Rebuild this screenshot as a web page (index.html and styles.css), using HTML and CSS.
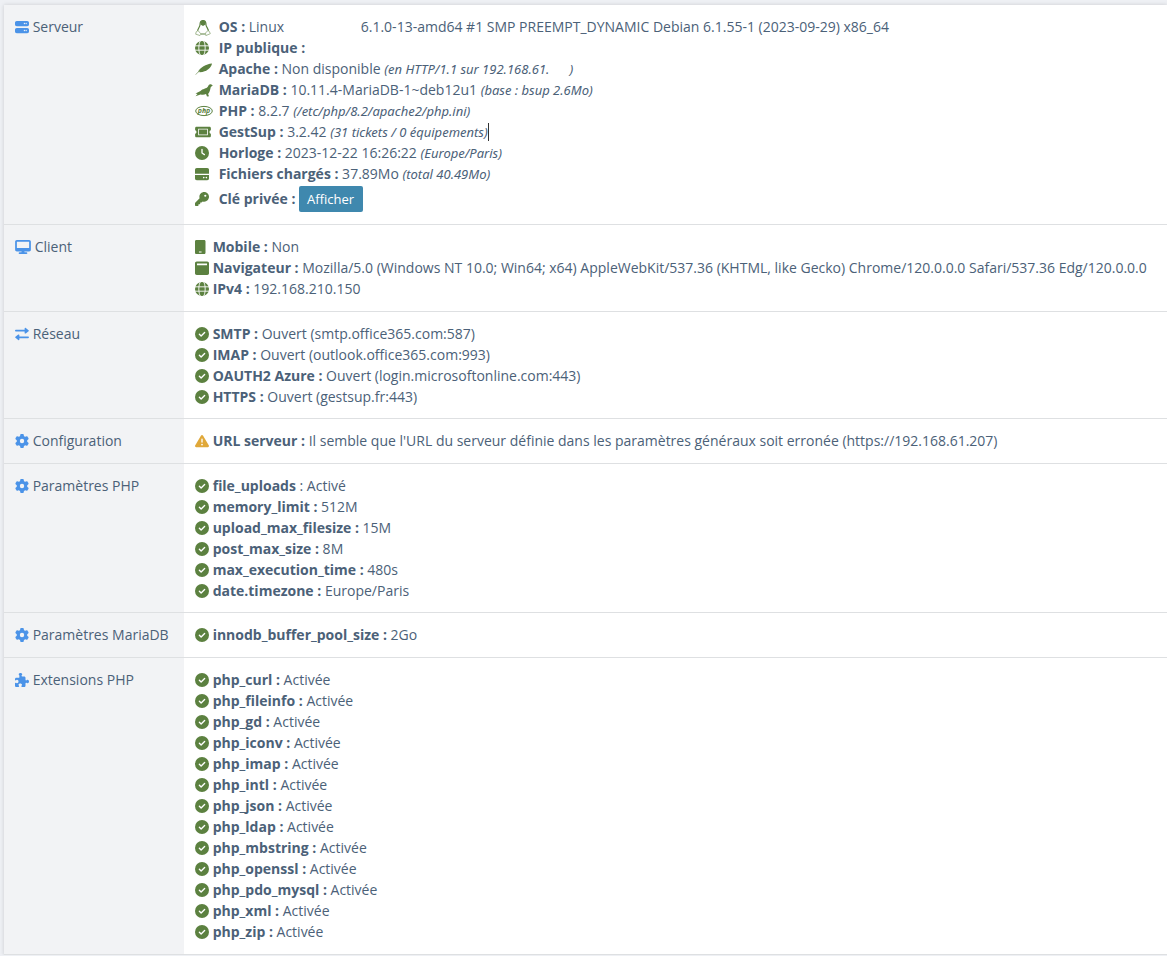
FILE: index.html
```html
<!DOCTYPE html>
<html lang="fr">
<head>
  <meta charset="UTF-8">
  <meta name="viewport" content="width=device-width, initial-scale=1.0">
  <title>GestSup - Système</title>
  <link rel="stylesheet" href="styles.css">
</head>
<body>
<svg class="sprite" aria-hidden="true">
  <symbol id="server" viewBox="0 0 512 512">
    <path fill-rule="evenodd" d="M64 32C29 32 0 61 0 96v64c0 35 29 64 64 64h384c35 0 64-29 64-64V96c0-35-29-64-64-64zM344 104a24 24 0 1 1 0 48 24 24 0 1 1 0-48zm64 0a24 24 0 1 1 0 48 24 24 0 1 1 0-48zM64 288c-35 0-64 29-64 64v64c0 35 29 64 64 64h384c35 0 64-29 64-64v-64c0-35-29-64-64-64zM344 360a24 24 0 1 1 0 48 24 24 0 1 1 0-48zm64 0a24 24 0 1 1 0 48 24 24 0 1 1 0-48z"/>
  </symbol>
  <symbol id="desktop" viewBox="0 0 576 512">
    <path fill-rule="evenodd" d="M64 0C29 0 0 29 0 64v288c0 35 29 64 64 64h176l-11 32h-69c-18 0-32 14-32 32s14 32 32 32h256c18 0 32-14 32-32s-14-32-32-32h-69l-11-32h176c35 0 64-29 64-64V64c0-35-29-64-64-64zm0 64h448v224H64z"/>
  </symbol>
  <symbol id="exchange" viewBox="0 0 512 512">
    <path d="M0 136c0-18 12-32 30-32h322V56c0-22 26-33 41-18l104 80c15 12 15 24 0 36l-104 80c-15 15-41 4-41-18v-48H30c-18 0-30-14-30-32zM512 376c0-18-12-32-30-32H160v-48c0-22-26-33-41-18L15 358c-15 12-15 24 0 36l104 80c15 15 41 4 41-18v-48h322c18 0 30-14 30-32z"/>
  </symbol>
  <symbol id="gear" viewBox="0 0 512 512">
    <path d="M495.9 166.6c3.2 8.7 .5 18.4-6.4 24.6l-43.3 39.4c1.1 8.3 1.7 16.8 1.7 25.4s-.6 17.1-1.7 25.4l43.3 39.4c6.9 6.2 9.6 15.9 6.4 24.6c-4.4 11.9-9.7 23.3-15.8 34.3l-4.7 8.1c-6.6 11-14 21.4-22.1 31.2c-5.9 7.2-15.7 9.6-24.5 6.8l-55.7-17.7c-13.4 10.3-28.2 18.9-44 25.4l-12.5 57.1c-2 9.1-9 16.3-18.2 17.8c-13.8 2.3-28 3.5-42.5 3.5s-28.7-1.2-42.5-3.5c-9.2-1.5-16.2-8.7-18.2-17.8l-12.5-57.1c-15.8-6.5-30.6-15.1-44-25.4L83.1 425.9c-8.8 2.8-18.6 .3-24.5-6.8c-8.1-9.8-15.5-20.2-22.1-31.2l-4.7-8.1c-6.1-11-11.4-22.4-15.8-34.3c-3.2-8.7-.5-18.4 6.4-24.6l43.3-39.4C64.6 273.1 64 264.6 64 256s.6-17.1 1.7-25.4L22.4 191.2c-6.9-6.2-9.6-15.9-6.4-24.6c4.4-11.9 9.7-23.3 15.8-34.3l4.7-8.1c6.6-11 14-21.4 22.1-31.2c5.9-7.2 15.7-9.6 24.5-6.8l55.7 17.7c13.4-10.3 28.2-18.9 44-25.4l12.5-57.1c2-9.1 9-16.3 18.2-17.8C227.3 1.2 241.5 0 256 0s28.7 1.2 42.5 3.5c9.2 1.5 16.2 8.7 18.2 17.8l12.5 57.1c15.8 6.5 30.6 15.1 44 25.4l55.7-17.7c8.8-2.8 18.6-.3 24.5 6.8c8.1 9.8 15.5 20.2 22.1 31.2l4.7 8.1c6.1 11 11.4 22.4 15.8 34.3zM256 336a80 80 0 1 0 0-160 80 80 0 1 0 0 160z"/>
  </symbol>
  <symbol id="puzzle" viewBox="0 0 512 512">
    <path d="M160 104c0-13-6-19-13-27-7-7-11-16-11-25 0-29 29-52 64-52s64 23 64 52c0 9-4 18-11 25-7 8-13 14-13 27 0 13 11 24 24 24h72c26 0 48 22 48 48v72c0 13 11 24 24 24 13 0 19-6 27-13 7-7 16-11 25-11 29 0 52 29 52 64s-23 64-52 64c-9 0-18-4-25-11-8-7-14-13-27-13-13 0-24 11-24 24v88c0 26-22 48-48 48h-80c-13 0-24-11-24-24 0-13 6-19 13-27 7-7 11-16 11-25 0-29-29-52-64-52s-64 23-64 52c0 9 4 18 11 25 7 8 13 14 13 27 0 13-11 24-24 24H48c-26 0-48-22-48-48v-88c0-13 11-24 24-24 13 0 19 6 27 13 7 7 16 11 25 11 29 0 52-29 52-64s-23-64-52-64c-9 0-18 4-25 11-8 7-14 13-27 13-13 0-24-11-24-24v-24c0-26 22-48 48-48h88c13 0 24-11 24-24z"/>
  </symbol>
  <symbol id="check" viewBox="0 0 512 512">
    <circle cx="256" cy="256" r="256"/>
    <path d="M160 264l64 64 128-128" fill="none" stroke="#fff" stroke-width="50" stroke-linecap="round" stroke-linejoin="round"/>
  </symbol>
  <symbol id="warning" viewBox="0 0 512 512">
    <path d="M256 32c14 0 27 7 35 20l216 368c16 27-3 60-35 60H40c-32 0-51-33-35-60L221 52c8-13 21-20 35-20z"/>
    <path d="M256 184v112" fill="none" stroke="#fff" stroke-width="48" stroke-linecap="round"/>
    <circle cx="256" cy="384" r="32" fill="#fff"/>
  </symbol>
  <symbol id="globe" viewBox="0 0 512 512">
    <circle cx="256" cy="256" r="256"/>
    <g fill="none" stroke="#fff" stroke-width="32">
      <path d="M0 176h512M0 336h512"/>
      <path d="M200-10C120 90 120 422 200 522M312-10c80 100 80 432 0 532"/>
    </g>
  </symbol>
  <symbol id="clock" viewBox="0 0 512 512">
    <circle cx="256" cy="256" r="256"/>
    <path d="M256 120v136l88 60" fill="none" stroke="#fff" stroke-width="48" stroke-linecap="round" stroke-linejoin="round"/>
  </symbol>
  <symbol id="drive" viewBox="0 0 512 512">
    <path d="M0 96c0-35 29-64 64-64h384c35 0 64 29 64 64v150H0z"/>
    <path fill-rule="evenodd" d="M0 288h512v128c0 35-29 64-64 64H64c-35 0-64-29-64-64zM320 356a30 30 0 1 0 0 60 30 30 0 1 0 0-60zm96 0a30 30 0 1 0 0 60 30 30 0 1 0 0-60z"/>
  </symbol>
  <symbol id="key" viewBox="0 0 512 512">
    <path d="M336 352c97.2 0 176-78.8 176-176S433.2 0 336 0S160 78.8 160 176c0 18.7 2.9 36.8 8.3 53.7L7 391c-4.5 4.5-7 10.6-7 17v80c0 13.3 10.7 24 24 24h80c13.3 0 24-10.7 24-24V448h40c13.3 0 24-10.7 24-24V384h40c6.4 0 12.5-2.5 17-7l33.3-33.3c16.9 5.4 35 8.3 53.7 8.3zM376 96a40 40 0 1 1 0 80 40 40 0 1 1 0-80z"/>
  </symbol>
  <symbol id="ticket" viewBox="0 0 576 512">
    <path fill-rule="evenodd" d="M48 64h480c27 0 48 21 48 48v80c-35 0-48 29-48 64s13 64 48 64v80c0 27-21 48-48 48H48c-27 0-48-21-48-48v-80c35 0 48-29 48-64s-13-64-48-64v-80c0-27 21-48 48-48zm64 72v240h352V136z"/>
    <path d="M142 164h292v184H142z"/>
  </symbol>
  <symbol id="mobile" viewBox="0 0 384 512" preserveAspectRatio="xMinYMid">
    <path fill-rule="evenodd" d="M48 0h288c26 0 48 22 48 48v416c0 26-22 48-48 48H48c-26 0-48-22-48-48V48C0 22 22 0 48 0zm96 424v34h96v-34z"/>
  </symbol>
  <symbol id="window" viewBox="0 0 512 512">
    <path fill-rule="evenodd" d="M64 16h384c35 0 64 29 64 64v368c0 35-29 64-64 64H64c-35 0-64-29-64-64V80c0-35 29-64 64-64zm8 72v66h368V88z"/>
  </symbol>
  <symbol id="linux" viewBox="0 0 16 16">
    <path d="M5 5C5 2 6 .5 8 .5S11 2 11 5c.3 2 2.500 4 2.500 6.500M5 5c-.2 2-2.500 4-2.500 6.500M6 14h4.500" fill="none" stroke="#5c8140" stroke-width="1.200"/>
    <path d="M5.500 2c1-2 4-2 5 0v2.500L8 6 5.500 4.500z"/>
    <path d="M3 10.500l3 3.500-1 1.500-4.300-1.300.5-2.400zM13 10.500l-2.500 2.500.3 2.600 4.500-1.900-1-2.300z" fill="#fff" stroke="#8fa97a" stroke-width=".8"/>
  </symbol>
  <symbol id="feather" viewBox="0 0 18 14">
    <path d="M3 9.800C5 5.500 11 2 17 1.500c-.5 4-5.500 8.500-12 8.800z"/>
    <path d="M.8 12.500C2 11 3 10 5 9" fill="none" stroke="#8fa97a" stroke-width="1"/>
  </symbol>
  <symbol id="seal" viewBox="0 0 18 14">
    <path d="M17.800 2.500L16 1.200c-2-.4-2.500 1.300-3 2.300-1.500 2.500-5.500 2-7.500 4.500L.5 10.500l2 .5-2 2.300 5-1.800c2.500.5 4 .3 5.500-.5l1 2.500 2-.2-.9-2.300c2-2 2-5 2.700-7z"/>
  </symbol>
  <symbol id="php" viewBox="0 0 18 12">
    <ellipse cx="9" cy="6" rx="8.300" ry="4.600" fill="#fff" stroke="#5c8140" stroke-width="1"/>
    <text class="php-text" x="9" y="8" text-anchor="middle">php</text>
  </symbol>
</svg>

<div class="card">
  <table class="infos">
    <tr>
      <th scope="row"><svg class="icon"><use href="#server"/></svg> Serveur</th>
      <td>
        <ul class="server">
          <li><svg class="icon tall"><use href="#linux"/></svg> <b>OS :</b> Linux <span class="kernel">6.1.0-13-amd64 #1 SMP PREEMPT_DYNAMIC Debian 6.1.55-1 (2023-09-29) x86_64</span></li>
          <li><svg class="icon"><use href="#globe"/></svg> <b>IP publique :</b></li>
          <li><svg class="icon wide"><use href="#feather"/></svg> <b>Apache :</b> Non disponible <i>(en HTTP/1.1 sur 192.168.61.<span class="blank"></span>)</i></li>
          <li><svg class="icon wide"><use href="#seal"/></svg> <b>MariaDB :</b> 10.11.4-MariaDB-1~deb12u1 <i>(base : bsup 2.6Mo)</i></li>
          <li><svg class="icon wide"><use href="#php"/></svg> <b>PHP :</b> 8.2.7 <i>(/etc/php/8.2/apache2/php.ini)</i></li>
          <li><svg class="icon ticket"><use href="#ticket"/></svg> <b>GestSup :</b> 3.2.42 <i class="caret">(31 tickets / 0 équipements)</i></li>
          <li><svg class="icon"><use href="#clock"/></svg> <b>Horloge :</b> 2023-12-22 16:26:22 <i>(Europe/Paris)</i></li>
          <li><svg class="icon"><use href="#drive"/></svg> <b>Fichiers chargés :</b> 37.89Mo <i>(total 40.49Mo)</i></li>
          <li class="private-key"><svg class="icon"><use href="#key"/></svg> <b>Clé privée :</b> <button class="btn" type="button">Afficher</button></li>
        </ul>
      </td>
    </tr>
    <tr>
      <th scope="row"><svg class="icon desktop"><use href="#desktop"/></svg> Client</th>
      <td>
        <ul>
          <li><svg class="icon"><use href="#mobile"/></svg> <b>Mobile :</b> Non</li>
          <li><svg class="icon"><use href="#window"/></svg> <b>Navigateur :</b> Mozilla/5.0 (Windows NT 10.0; Win64; x64) AppleWebKit/537.36 (KHTML, like Gecko) Chrome/120.0.0.0 Safari/537.36 Edg/120.0.0.0</li>
          <li><svg class="icon"><use href="#globe"/></svg> <b>IPv4 :</b> 192.168.210.150</li>
        </ul>
      </td>
    </tr>
    <tr class="checks">
      <th scope="row"><svg class="icon"><use href="#exchange"/></svg> Réseau</th>
      <td>
        <ul>
          <li><svg class="icon"><use href="#check"/></svg> <b>SMTP :</b> Ouvert (smtp.office365.com:587)</li>
          <li><svg class="icon"><use href="#check"/></svg> <b>IMAP :</b> Ouvert (outlook.office365.com:993)</li>
          <li><svg class="icon"><use href="#check"/></svg> <b>OAUTH2 Azure :</b> Ouvert (login.microsoftonline.com:443)</li>
          <li><svg class="icon"><use href="#check"/></svg> <b>HTTPS :</b> Ouvert (gestsup.fr:443)</li>
        </ul>
      </td>
    </tr>
    <tr>
      <th scope="row"><svg class="icon"><use href="#gear"/></svg> Configuration</th>
      <td>
        <ul>
          <li><svg class="icon warning"><use href="#warning"/></svg> <b>URL serveur :</b> Il semble que l'URL du serveur définie dans les paramètres généraux soit erronée (https://192.168.61.207)</li>
        </ul>
      </td>
    </tr>
    <tr class="checks">
      <th scope="row"><svg class="icon"><use href="#gear"/></svg> Paramètres PHP</th>
      <td>
        <ul>
          <li><svg class="icon"><use href="#check"/></svg> <b>file_uploads</b> : Activé</li>
          <li><svg class="icon"><use href="#check"/></svg> <b>memory_limit :</b> 512M</li>
          <li><svg class="icon"><use href="#check"/></svg> <b>upload_max_filesize :</b> 15M</li>
          <li><svg class="icon"><use href="#check"/></svg> <b>post_max_size :</b> 8M</li>
          <li><svg class="icon"><use href="#check"/></svg> <b>max_execution_time :</b> 480s</li>
          <li><svg class="icon"><use href="#check"/></svg> <b>date.timezone :</b> Europe/Paris</li>
        </ul>
      </td>
    </tr>
    <tr>
      <th scope="row"><svg class="icon"><use href="#gear"/></svg> Paramètres MariaDB</th>
      <td>
        <ul>
          <li><svg class="icon"><use href="#check"/></svg> <b>innodb_buffer_pool_size :</b> 2Go</li>
        </ul>
      </td>
    </tr>
    <tr>
      <th scope="row"><svg class="icon"><use href="#puzzle"/></svg> Extensions PHP</th>
      <td>
        <ul>
          <li><svg class="icon"><use href="#check"/></svg> <b>php_curl :</b> Activée</li>
          <li><svg class="icon"><use href="#check"/></svg> <b>php_fileinfo :</b> Activée</li>
          <li><svg class="icon"><use href="#check"/></svg> <b>php_gd :</b> Activée</li>
          <li><svg class="icon"><use href="#check"/></svg> <b>php_iconv :</b> Activée</li>
          <li><svg class="icon"><use href="#check"/></svg> <b>php_imap :</b> Activée</li>
          <li><svg class="icon"><use href="#check"/></svg> <b>php_intl :</b> Activée</li>
          <li><svg class="icon"><use href="#check"/></svg> <b>php_json :</b> Activée</li>
          <li><svg class="icon"><use href="#check"/></svg> <b>php_ldap :</b> Activée</li>
          <li><svg class="icon"><use href="#check"/></svg> <b>php_mbstring :</b> Activée</li>
          <li><svg class="icon"><use href="#check"/></svg> <b>php_openssl :</b> Activée</li>
          <li><svg class="icon"><use href="#check"/></svg> <b>php_pdo_mysql :</b> Activée</li>
          <li><svg class="icon"><use href="#check"/></svg> <b>php_xml :</b> Activée</li>
          <li><svg class="icon"><use href="#check"/></svg> <b>php_zip :</b> Activée</li>
        </ul>
      </td>
    </tr>
  </table>
</div>
</body>
</html>
```
FILE: styles.css
```css
body {
  margin: 0;
  padding: 5px 0 0 4px;
  background-color: #eef0f4;
  color: #4b6178;
  font-family: 'Open Sans', sans-serif;
  font-size: 14px;
  line-height: 21px;
}
.sprite {
  display: none;
}
.card {
  background-color: #fff;
  box-shadow: 0 0 4px rgba(0, 0, 0, 0.15);
}
.infos {
  width: 100%;
  border-spacing: 0;
}
.infos th,
.infos td {
  padding: 11px 11px 12px;
  border-bottom: 1px solid #dee0e2;
  text-align: left;
  vertical-align: top;
}
.infos th {
  box-sizing: border-box;
  width: 180px;
  background-color: #f2f3f5;
  font-weight: normal;
  white-space: nowrap;
}
.infos .checks td {
  padding-bottom: 11px;
}
.infos ul {
  margin: 0;
  padding: 0;
  list-style: none;
}
.infos b {
  font-weight: 700;
}
.infos i {
  font-family: 'Noto Sans', sans-serif;
  font-size: 13px;
  line-height: 1;
}
.icon {
  width: 14px;
  height: 14px;
  fill: #5c8140;
  vertical-align: -2px;
}
.infos th .icon {
  fill: #4b93e8;
}
.infos .desktop {
  width: 16px;
}
.infos .warning {
  fill: #e0a839;
}
.server .icon {
  margin-right: 6px;
}
.server .wide {
  width: 18px;
  margin-right: 2px;
}
.server .tall,
.server .ticket {
  width: 16px;
  margin-right: 4px;
}
.server .tall {
  height: 16px;
  vertical-align: -4px;
}
.php-text {
  fill: #5c8140;
  font-family: 'Open Sans', sans-serif;
  font-size: 7px;
  font-style: italic;
  font-weight: 700;
}
.kernel {
  margin-left: 73px;
}
.blank {
  display: inline-block;
  width: 20px;
}
.caret {
  border-right: 1px solid #333;
}
.private-key {
  padding-top: 2px;
}
.btn {
  height: 26px;
  padding: 0 9px 0 8px;
  border: none;
  border-radius: 2px;
  background-color: #3f88ae;
  color: #fff;
  font-family: inherit;
  font-size: 13px;
  cursor: pointer;
}
.btn:hover {
  background-color: #357799;
}
```
